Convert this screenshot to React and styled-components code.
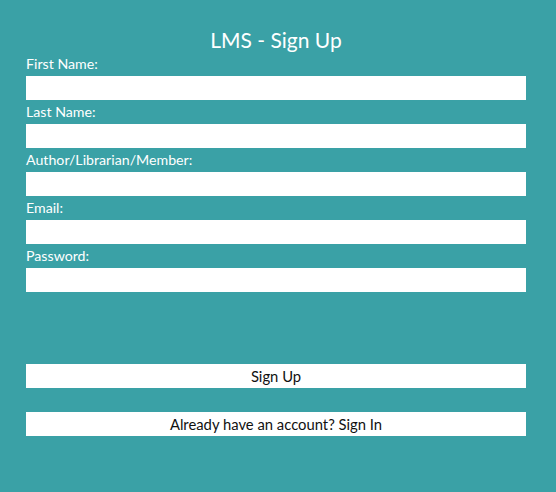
import React from 'react';
import styled, { createGlobalStyle } from 'styled-components';

const GlobalStyle = createGlobalStyle`
  html, body {
    margin: 0;
    padding: 0;
    background-color: #3aa1a6;
  }
`;

const Page = styled.div`
  min-height: 492px;
  background-color: #3aa1a6;
  font-family: 'Lato', 'Noto Sans', sans-serif;
`;

const Form = styled.form`
  width: 500px;
  padding: 28px 0 0 26px;
  display: flex;
  flex-direction: column;
`;

const Title = styled.h1`
  margin: 0;
  font-size: 21px;
  font-weight: 400;
  line-height: 24px;
  color: #ffffff;
  text-align: center;
`;

const Label = styled.label`
  display: block;
  font-size: 14.2px;
  line-height: 24px;
  color: #ffffff;
`;

const Input = styled.input`
  display: block;
  box-sizing: border-box;
  width: 500px;
  height: 24px;
  margin: 0;
  border: none;
  padding: 0 6px;
  background: #ffffff;
  font-family: inherit;
  font-size: 14px;
  outline: none;
`;

const Actions = styled.div`
  display: flex;
  flex-direction: column;
  gap: 24px;
  margin-top: 72px;
`;

const Button = styled.button`
  box-sizing: border-box;
  width: 500px;
  height: 24px;
  padding: 0;
  border: none;
  background: #ffffff;
  color: #111111;
  font-family: inherit;
  font-size: 14.8px;
  cursor: pointer;
`;

const fields = [
  { id: 'first', label: 'First Name:', type: 'text' },
  { id: 'last', label: 'Last Name:', type: 'text' },
  { id: 'role', label: 'Author/Librarian/Member:', type: 'text' },
  { id: 'email', label: 'Email:', type: 'email' },
  { id: 'password', label: 'Password:', type: 'password' },
];

export default function App() {
  return (
    <Page>
      <GlobalStyle />
      <Form onSubmit={(e) => e.preventDefault()}>
        <Title>LMS - Sign Up</Title>
        {fields.map((f) => (
          <div key={f.id}>
            <Label htmlFor={f.id}>{f.label}</Label>
            <Input id={f.id} type={f.type} />
          </div>
        ))}
        <Actions>
          <Button type="submit">Sign Up</Button>
          <Button type="button">Already have an account? Sign In</Button>
        </Actions>
      </Form>
    </Page>
  );
}
